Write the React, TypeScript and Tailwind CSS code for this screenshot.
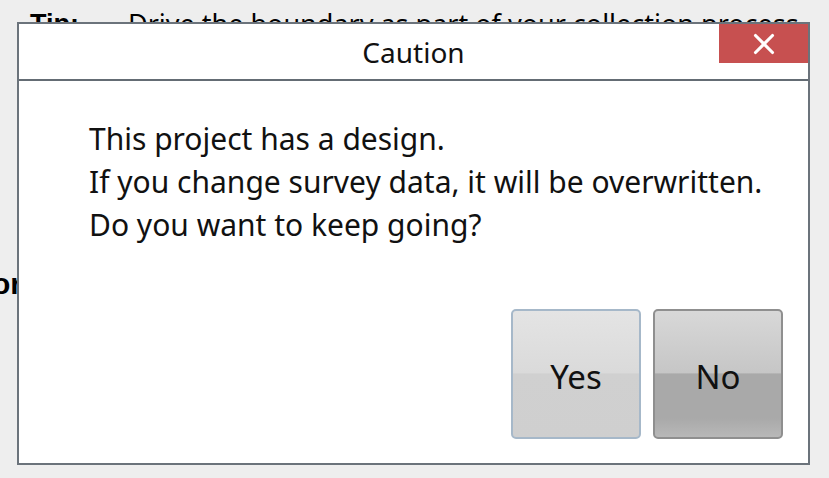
import { X } from "lucide-react";

const font = { fontFamily: '"Noto Sans", "Open Sans", sans-serif' };

export default function App() {
  return (
    <div className="relative w-[829px] h-[478px] overflow-hidden bg-[#eeeeee]" style={font}>
      {/* page behind the dialog */}
      <div className="pt-[7px] pl-[30px] text-[27px] leading-[34px] text-black">
        <div className="flex">
          <span className="w-[98px] font-bold" style={{ fontFamily: '"Liberation Sans", sans-serif' }}>
            Tip:
          </span>
          <span>Drive the boundary as part of your collection process</span>
        </div>
      </div>
      <div
        className="absolute left-[-8px] top-[267px] text-[30px] font-bold leading-[34px]"
        style={{ fontFamily: '"Liberation Sans", sans-serif' }}
      >
        or
      </div>

      {/* dialog */}
      <div className="absolute left-[17px] top-[22px] w-[793px] h-[443px] border-2 border-[#6b737b] bg-white flex flex-col">
        <div className="relative h-[57px] flex items-center justify-center border-b-2 border-[#646c74]">
          <span className="text-[28px] text-[#111]">Caution</span>
          <button className="absolute right-0 top-0 w-[89px] h-[39px] bg-[#c75050] flex items-center justify-center">
            <X className="w-[34px] h-[34px] text-white" strokeWidth={2.2} />
          </button>
        </div>
        <div className="flex-1 flex flex-col pl-[70px] pt-[36px]">
          <div className="text-[30px] leading-[43px] text-[#111] whitespace-nowrap">
            <p>This project has a design.</p>
            <p>If you change survey data, it will be overwritten.</p>
            <p>Do you want to keep going?</p>
          </div>
        </div>
        <div className="flex justify-end gap-[12px] pr-[25px] pb-[24px]">
          <button className="w-[130px] h-[130px] pt-[6px] rounded-[5px] border-2 border-[#a6b8c9] bg-[linear-gradient(to_bottom,#e4e4e4_0%,#dadada_49%,#d0d0d0_50%,#cfcfcf_100%)] text-[33px] text-[#111]">
            Yes
          </button>
          <button className="w-[130px] h-[130px] pt-[6px] rounded-[5px] border-2 border-[#8f8f8f] bg-[linear-gradient(to_bottom,#d8d8d8_0%,#c6c6c6_49%,#a9a9a9_50%,#a9a9a9_85%,#b8b8b8_100%)] text-[33px] text-[#111]">
            No
          </button>
        </div>
      </div>
    </div>
  );
}
